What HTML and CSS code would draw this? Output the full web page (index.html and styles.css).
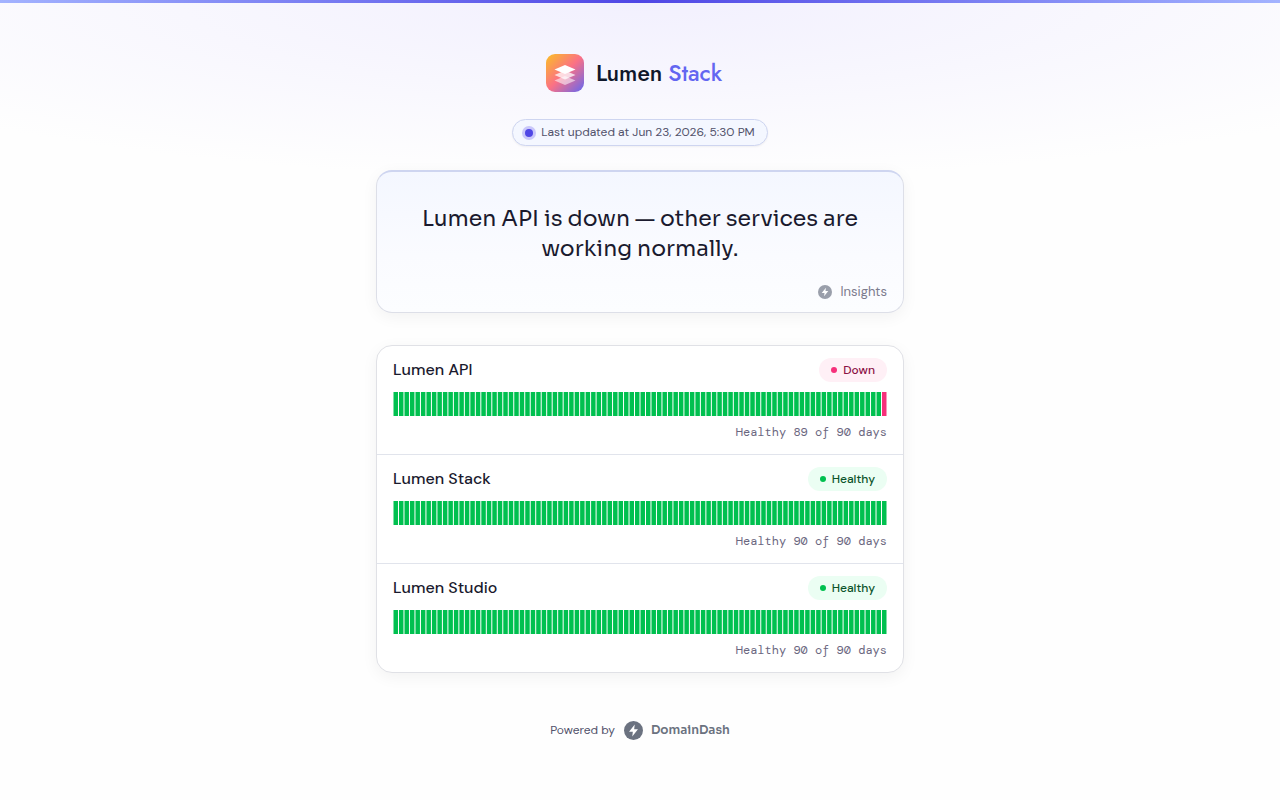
FILE: index.html
```html
<!DOCTYPE html>
<html lang="en">
<head>
    <meta charset="UTF-8">
    <meta name="viewport" content="width=device-width, initial-scale=1.0">
    <title>Lumen Stack Status</title>
    <link rel="stylesheet" href="styles.css">
</head>
<body>
    <div class="page">
        <header class="header">
            <a class="logo" href="#">
                <svg class="logo-icon" viewBox="0 0 38 38" aria-hidden="true">
                    <defs>
                        <linearGradient id="logo-bg" x1="0" y1="0" x2="1" y2="1">
                            <stop offset="0" stop-color="#fbbf24"/>
                            <stop offset="0.5" stop-color="#fb7185"/>
                            <stop offset="1" stop-color="#6366f1"/>
                        </linearGradient>
                    </defs>
                    <rect width="38" height="38" rx="9" fill="url(#logo-bg)"/>
                    <path d="M19 22l10.500 4.500L19 31 8.500 26.500z" fill="#fff" opacity="0.55"/>
                    <path d="M19 16.500l10.500 4.500L19 25.500 8.500 21z" fill="#fff" opacity="0.75"/>
                    <path d="M19 11l10.500 4.500L19 20 8.500 15.500z" fill="#fff"/>
                </svg>
                <span class="logo-text"><span>Lumen</span> <span class="accent">Stack</span></span>
            </a>
            <p class="updated"><span class="pulse"></span>Last updated at Jun 23, 2026, 5:30 PM</p>
        </header>

        <main>
            <section class="summary">
                <h1>Lumen API is down — other services are working normally.</h1>
                <p class="insights">
                    <svg class="insights-icon" viewBox="0 0 20 20" aria-hidden="true">
                        <circle cx="10" cy="10" r="10" fill="#9a9fab"/>
                        <path d="M11.300 3.800L5.300 11.300h4L8.700 16.200l6-7.500h-4z" fill="#fff"/>
                    </svg>
                    Insights
                </p>
            </section>

            <ul class="services">
                <li class="service">
                    <div class="service-head">
                        <h2>Lumen API</h2>
                        <span class="badge down">Down</span>
                    </div>
                    <svg class="bars" viewBox="0 0 494 24" preserveAspectRatio="none" data-down="89"></svg>
                    <p class="days">Healthy 89 of 90 days</p>
                </li>
                <li class="service">
                    <div class="service-head">
                        <h2>Lumen Stack</h2>
                        <span class="badge healthy">Healthy</span>
                    </div>
                    <svg class="bars" viewBox="0 0 494 24" preserveAspectRatio="none"></svg>
                    <p class="days">Healthy 90 of 90 days</p>
                </li>
                <li class="service">
                    <div class="service-head">
                        <h2>Lumen Studio</h2>
                        <span class="badge healthy">Healthy</span>
                    </div>
                    <svg class="bars" viewBox="0 0 494 24" preserveAspectRatio="none"></svg>
                    <p class="days">Healthy 90 of 90 days</p>
                </li>
            </ul>
        </main>

        <footer class="footer">
            Powered by
            <a class="brand" href="#">
                <svg class="brand-icon" viewBox="0 0 20 20" aria-hidden="true">
                    <circle cx="10" cy="10" r="10" fill="#6b7280"/>
                    <path d="M11.300 3.800L5.300 11.300h4L8.700 16.200l6-7.500h-4z" fill="#fff"/>
                </svg>
                DomainDash
            </a>
        </footer>
    </div>

    <script>
        const DAYS = 90;
        const step = 494 / DAYS;

        document.querySelectorAll(".bars").forEach((svg) => {
            for (let i = 0; i < DAYS; i++) {
                const bar = document.createElementNS("http://www.w3.org/2000/svg", "rect");
                bar.setAttribute("x", i * step + 0.5);
                bar.setAttribute("width", step - 1);
                bar.setAttribute("height", 24);
                bar.setAttribute("class", svg.dataset.down === String(i) ? "bar bar-down" : "bar");
                svg.appendChild(bar);
            }
        });
    </script>
</body>
</html>
```
FILE: styles.css
```css
* {
    margin: 0;
    padding: 0;
    box-sizing: border-box;
}

body {
    font-family: "DM Sans", Inter, sans-serif;
    font-size: 12px;
    color: #52526b;
    background: radial-gradient(ellipse 72% 180px at 50% 0, #f2f0fe, #fefefe) no-repeat #fefefe;
    min-height: 100vh;
}

body::before {
    content: "";
    display: block;
    height: 3px;
    background: linear-gradient(90deg, #a3b3ff, #4f46e5 50%, #a3b3ff);
}

a {
    color: inherit;
    text-decoration: none;
}

.page {
    max-width: 560px;
    margin: 0 auto;
    padding: 51px 16px;
}

.header {
    display: flex;
    flex-direction: column;
    align-items: center;
    gap: 27px;
}

.logo {
    display: flex;
    align-items: center;
    gap: 12px;
    padding-right: 12px;
}

.logo-icon {
    width: 38px;
    height: 38px;
}

.logo-text {
    display: flex;
    gap: 6px;
    font-family: Jost, Lato, sans-serif;
    font-size: 23px;
    font-weight: 500;
    line-height: 38px;
    color: #0f172a;
}

.accent {
    color: #6366f1;
}

.updated {
    display: flex;
    align-items: center;
    gap: 8px;
    padding: 0 12px;
    line-height: 25px;
    border: 1px solid #ced5f0;
    border-radius: 14px;
    background: #f4f7ff;
    box-shadow: 0 1px 2px rgba(0, 0, 0, 0.05);
}

.pulse {
    width: 8px;
    height: 8px;
    border-radius: 50%;
    background: #4f46e5;
    box-shadow: 0 0 0 3px #c9c7fa;
}

.summary {
    margin-top: 24px;
    padding: 32px 16px 8px;
    border: 1px solid #dddfe8;
    border-top: 2px solid #ced5f0;
    border-radius: 16px;
    background: linear-gradient(#f4f7ff, #fafbff 60%, #fcfdff);
    box-shadow: 0 4px 16px rgba(0, 0, 0, 0.05);
}

h1 {
    font-family: Sora, Inter, sans-serif;
    font-size: 22px;
    font-weight: 500;
    line-height: 30px;
    text-align: center;
    color: #1a1a2e;
}

.insights {
    display: flex;
    align-items: center;
    justify-content: flex-end;
    gap: 8px;
    margin-top: 16px;
    font-size: 13px;
    line-height: 24px;
    color: #7b7b8d;
}

.insights-icon {
    width: 14px;
    height: 14px;
}

.services {
    margin-top: 32px;
    list-style: none;
    border: 1px solid #e0e1e6;
    border-radius: 16px;
    background: #fff;
    box-shadow: 0 4px 16px rgba(0, 0, 0, 0.05);
}

.service {
    padding: 12px 16px;
}

.service + .service {
    border-top: 1px solid #e1e4ec;
}

.service-head {
    display: flex;
    align-items: center;
    justify-content: space-between;
}

h2 {
    font-size: 16px;
    font-weight: 500;
    line-height: 24px;
    color: #1a1a2e;
}

.badge {
    display: flex;
    align-items: center;
    gap: 6px;
    padding: 0 12px;
    line-height: 24px;
    font-weight: 500;
    border-radius: 12px;
}

.badge::before {
    content: "";
    width: 6px;
    height: 6px;
    border-radius: 50%;
    background: currentColor;
}

.down {
    color: #8b1145;
    background: #fff0f6;
}

.down::before {
    background: #f6307a;
}

.healthy {
    color: #0d542b;
    background: #ebfef3;
}

.healthy::before {
    background: #00c04f;
}

.bars {
    display: block;
    width: 100%;
    height: 24px;
    margin-top: 10px;
}

.bar {
    fill: #00c04f;
}

.bar-down {
    fill: #f6307a;
}

.days {
    margin-top: 6px;
    font-family: "DM Mono", "Liberation Mono", monospace;
    line-height: 20px;
    text-align: right;
    color: #6b6780;
}

.footer {
    display: flex;
    align-items: center;
    justify-content: center;
    gap: 9px;
    margin-top: 47px;
    line-height: 20px;
}

.brand {
    display: flex;
    align-items: center;
    gap: 8px;
    font-family: Sora, Inter, sans-serif;
    font-weight: 600;
    color: #6b7280;
}

.brand-icon {
    width: 19px;
    height: 19px;
}
```
